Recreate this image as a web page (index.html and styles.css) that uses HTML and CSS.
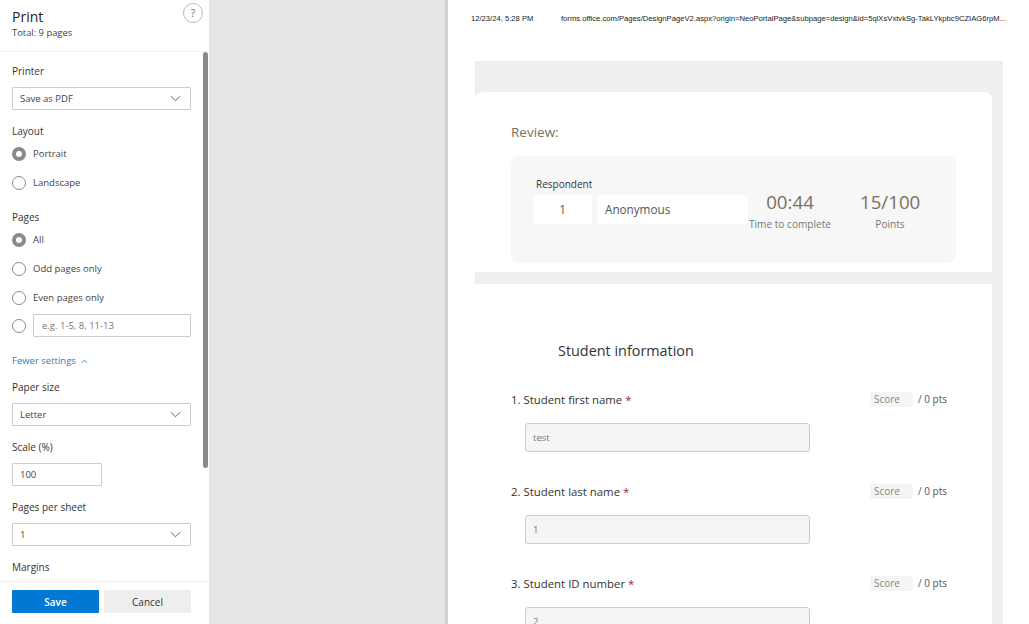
FILE: index.html
```html
<!DOCTYPE html>
<html lang="en">
<head>
    <meta charset="UTF-8">
    <meta name="viewport" content="width=device-width, initial-scale=1.0">
    <title>Print</title>
    <link rel="stylesheet" href="styles.css">
</head>
<body>

<div class="app">
    <!-- Print settings -->
    <aside class="sidebar">
        <header class="sidebar-head">
            <div>
                <h1>Print</h1>
                <p>Total: 9 pages</p>
            </div>
            <span class="help">?</span>
        </header>

        <div class="settings">
            <h2 class="label label-first">Printer</h2>
            <div class="select">
                <span>Save as PDF</span>
                <svg class="chevron" viewBox="0 0 12 7"><path d="M1 1l5 5 5-5"/></svg>
            </div>

            <h2 class="label label-layout">Layout</h2>
            <div class="radio"><i class="dot on"></i>Portrait</div>
            <div class="radio"><i class="dot"></i>Landscape</div>

            <h2 class="label label-pages">Pages</h2>
            <div class="radio"><i class="dot on"></i>All</div>
            <div class="radio"><i class="dot"></i>Odd pages only</div>
            <div class="radio"><i class="dot"></i>Even pages only</div>
            <div class="radio radio-input">
                <i class="dot"></i>
                <div class="range">e.g. 1-5, 8, 11-13</div>
            </div>

            <div class="fewer">
                Fewer settings
                <svg class="chevron-up" viewBox="0 0 8 5"><path d="M1 4l3-3 3 3"/></svg>
            </div>

            <h2 class="label label-paper">Paper size</h2>
            <div class="select">
                <span>Letter</span>
                <svg class="chevron" viewBox="0 0 12 7"><path d="M1 1l5 5 5-5"/></svg>
            </div>

            <h2 class="label">Scale (%)</h2>
            <div class="scale">100</div>

            <h2 class="label">Pages per sheet</h2>
            <div class="select">
                <span>1</span>
                <svg class="chevron" viewBox="0 0 12 7"><path d="M1 1l5 5 5-5"/></svg>
            </div>

            <h2 class="label">Margins</h2>
        </div>

        <div class="scroll-thumb"></div>

        <footer class="sidebar-foot">
            <button class="save-btn">Save</button>
            <button class="cancel-btn">Cancel</button>
        </footer>
    </aside>

    <div class="gutter"></div>

    <!-- Page preview -->
    <main class="paper">
        <div class="print-head">
            <span class="print-date">12/23/24, 5:28 PM</span>
            <span class="print-url">forms.office.com/Pages/DesignPageV2.aspx?origin=NeoPortalPage&amp;subpage=design&amp;id=5qlXsVxtvkSg-TakLYkpbc9CZIAG6rpM...</span>
        </div>

        <div class="form-bg">
            <section class="review-card">
                <h2 class="review-title">Review:</h2>
                <div class="review-box">
                    <div class="respondent">
                        <div class="respondent-label">Respondent</div>
                        <div class="respondent-fields">
                            <div class="resp-num">1</div>
                            <div class="resp-name">Anonymous</div>
                        </div>
                    </div>
                    <div class="stat stat-time">
                        <div class="stat-value">00:44</div>
                        <div class="stat-label">Time to complete</div>
                    </div>
                    <div class="stat stat-points">
                        <div class="stat-value">15/100</div>
                        <div class="stat-label">Points</div>
                    </div>
                </div>
            </section>

            <div class="band"></div>

            <section class="questions">
                <h2 class="section-title">Student information</h2>

                <div class="question">
                    <div class="question-row">
                        <div class="question-text">1. Student first name <span class="req">*</span></div>
                        <div class="score"><span class="score-box">Score</span>/ 0 pts</div>
                    </div>
                    <div class="answer">test</div>
                </div>

                <div class="question">
                    <div class="question-row">
                        <div class="question-text">2. Student last name <span class="req">*</span></div>
                        <div class="score"><span class="score-box">Score</span>/ 0 pts</div>
                    </div>
                    <div class="answer">1</div>
                </div>

                <div class="question">
                    <div class="question-row">
                        <div class="question-text">3. Student ID number <span class="req">*</span></div>
                        <div class="score"><span class="score-box">Score</span>/ 0 pts</div>
                    </div>
                    <div class="answer">2</div>
                </div>
            </section>
        </div>
    </main>
</div>

</body>
</html>
```

FILE: styles.css
```css
* {
    box-sizing: border-box;
}

html, body {
    margin: 0;
    height: 100%;
    overflow: hidden;
}

body {
    font-family: "Open Sans", "Noto Sans", Arial, sans-serif;
    color: #333;
    background-color: #e6e6e6;
}

.app {
    display: flex;
    height: 624px;
}

/* Sidebar */
.sidebar {
    position: relative;
    display: flex;
    flex-direction: column;
    flex: 0 0 209px;
    background-color: white;
}

.sidebar-head {
    display: flex;
    justify-content: space-between;
    flex: 0 0 52px;
    padding: 8px 6px 0 12px;
    border-bottom: 1px solid #eee;
}

.sidebar-head h1 {
    margin: 0;
    font-size: 14px;
    line-height: 18px;
    font-weight: 400;
    color: #222;
}

.sidebar-head p {
    margin: 0;
    font-size: 9.4px;
    line-height: 14px;
    color: #444;
}

.help {
    width: 20px;
    height: 20px;
    margin-top: -5px;
    border: 1px solid #bbb;
    border-radius: 50%;
    font-size: 10px;
    line-height: 18px;
    text-align: center;
    color: #666;
}

.settings {
    flex: 1;
    overflow: hidden;
    padding: 0 18px 0 12px;
}

.label {
    margin: 14px 0 9px;
    font-size: 10px;
    line-height: 14px;
    font-weight: 400;
    color: #333;
}

.label-first {
    margin-top: 12px;
}

.label-layout {
    margin-bottom: 1px;
}

.label-pages {
    margin: 13px 0 1px;
}

.label-paper {
    margin-top: 12px;
}

.select,
.scale,
.range {
    display: flex;
    align-items: center;
    height: 23px;
    border: 1px solid #ccc;
    border-radius: 1px;
    font-size: 9.5px;
    color: #444;
}

.select {
    justify-content: space-between;
    padding: 0 9px 0 7px;
}

.scale {
    width: 90px;
    padding-left: 7px;
}

.chevron {
    width: 11px;
    height: 7px;
    fill: none;
    stroke: #555;
    stroke-width: 1;
}

.radio {
    display: flex;
    align-items: center;
    gap: 7px;
    height: 29px;
    font-size: 9.5px;
    color: #444;
}

.radio-input {
    height: 23px;
    margin-top: 2px;
}

.dot {
    flex: 0 0 14px;
    width: 14px;
    height: 14px;
    border: 1px solid #8a8a8a;
    border-radius: 50%;
    background-color: white;
}

.dot.on {
    border: 4px solid #8a8a8a;
}

.range {
    flex: 1;
    padding-left: 8px;
    color: #777;
}

.fewer {
    display: flex;
    align-items: center;
    gap: 5px;
    margin-top: 17px;
    font-size: 9.5px;
    line-height: 14px;
    color: #2f7fba;
}

.chevron-up {
    width: 7px;
    height: 5px;
    fill: none;
    stroke: #2f7fba;
    stroke-width: 1;
}

.scroll-thumb {
    position: absolute;
    top: 52px;
    left: 203px;
    width: 5px;
    height: 416px;
    border-radius: 3px;
    background-color: #8a8a8a;
}

.sidebar-foot {
    display: flex;
    gap: 5px;
    flex: 0 0 43px;
    padding: 8px 18px 0 12px;
    border-top: 1px solid #eee;
    background-color: white;
}

.sidebar-foot button {
    flex: 1;
    height: 23px;
    padding: 0;
    border: none;
    border-radius: 1px;
    font-family: inherit;
    font-size: 10px;
    cursor: pointer;
}

.save-btn {
    background-color: #0078d4;
    color: white;
    font-weight: 600;
}

.cancel-btn {
    background-color: #eee;
    color: #333;
}

/* Preview */
.gutter {
    flex: 0 0 239px;
    border-right: 3px solid #d2d2d2;
}

.paper {
    flex: 1;
    padding: 0 26px 0 27px;
    background-color: white;
    overflow: hidden;
}

.print-head {
    display: flex;
    height: 61px;
    padding: 14px 0 0 23px;
    margin: 0 -22px 0 -27px;
    font-family: "Liberation Sans", Arial, sans-serif;
    font-size: 7.65px;
    line-height: 9px;
    color: #222;
    white-space: nowrap;
}

.print-date {
    width: 90px;
}

.form-bg {
    height: 563px;
    padding: 31px 11px 0 0;
    background-color: #efefef;
}

.review-card {
    height: 180px;
    padding: 30px 36px 0;
    border-radius: 8px 8px 0 0;
    background-color: white;
}

.review-title {
    margin: 0 0 14px;
    font-size: 13.5px;
    line-height: 20px;
    font-weight: 400;
    color: #7a6f60;
}

.review-box {
    display: flex;
    height: 107px;
    padding: 22px 0 0 22px;
    border-radius: 8px;
    background-color: #f7f7f7;
}

.respondent-label {
    margin-left: 3px;
    font-size: 10px;
    line-height: 13px;
    color: #333;
}

.respondent-fields {
    display: flex;
    gap: 5px;
    margin-top: 4px;
}

.resp-num,
.resp-name {
    height: 29px;
    border-radius: 3px;
    background-color: white;
    font-size: 11.7px;
    line-height: 29px;
    color: #555;
}

.resp-num {
    width: 59px;
    text-align: center;
}

.resp-name {
    width: 151px;
    padding-left: 8px;
}

.stat {
    margin-top: 10px;
    text-align: center;
}

.stat-time {
    width: 84px;
}

.stat-points {
    width: 60px;
    margin-left: 28px;
}

.stat-value {
    font-size: 18.7px;
    line-height: 28px;
    color: #7a6f60;
    white-space: nowrap;
}

.stat-label {
    margin-top: 1px;
    font-size: 10.1px;
    line-height: 14px;
    color: #777;
    white-space: nowrap;
}

.band {
    height: 12px;
}

.questions {
    height: 340px;
    padding: 57px 45px 0 36px;
    background-color: white;
}

.section-title {
    margin: 0 0 28px 47px;
    font-size: 14.4px;
    line-height: 20px;
    font-weight: 400;
    color: #333;
}

.question {
    height: 92px;
}

.question-row {
    display: flex;
    justify-content: space-between;
    align-items: center;
    height: 20px;
}

.question-text {
    font-size: 11.4px;
    color: #333;
}

.req {
    color: #a4262c;
}

.score {
    display: flex;
    align-items: center;
    gap: 5px;
    font-size: 10px;
    color: #555;
}

.score-box {
    width: 43px;
    height: 15px;
    padding-left: 4px;
    border-radius: 2px;
    background-color: #f5f5f5;
    line-height: 15px;
    color: #888;
}

.answer {
    width: 285px;
    height: 29px;
    margin: 14px 0 0 14px;
    padding-left: 7px;
    border: 1px solid #ccc;
    border-radius: 3px;
    background-color: #f5f5f5;
    font-size: 9.5px;
    line-height: 28px;
    color: #777;
}
```
